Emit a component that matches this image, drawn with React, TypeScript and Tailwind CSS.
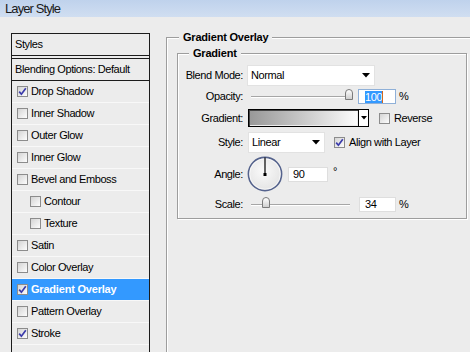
import React from 'react';

type StyleItem = {
  label: string;
  checked?: boolean;
  indent?: boolean;
  selected?: boolean;
};

const styleItems: StyleItem[] = [
  { label: 'Drop Shadow', checked: true },
  { label: 'Inner Shadow' },
  { label: 'Outer Glow' },
  { label: 'Inner Glow' },
  { label: 'Bevel and Emboss' },
  { label: 'Contour', indent: true },
  { label: 'Texture', indent: true },
  { label: 'Satin' },
  { label: 'Color Overlay' },
  { label: 'Gradient Overlay', checked: true, selected: true },
  { label: 'Pattern Overlay' },
  { label: 'Stroke', checked: true },
  { label: '' },
];

const Checkbox = ({ checked }: { checked?: boolean }) => (
  <span className="flex h-[11px] w-[11px] shrink-0 items-center justify-center border border-[#8c8c8c] bg-gradient-to-br from-[#d4d4d4] to-[#fdfdfd]">
    {checked && (
      <svg width="9" height="9" viewBox="0 0 9 9">
        <path d="M1.2 4.6 L3.4 7.2 L7.8 1.2" stroke="#3b3bab" strokeWidth="1.7" fill="none" />
      </svg>
    )}
  </span>
);

const DownArrow = () => (
  <svg width="8" height="5" viewBox="0 0 8 5">
    <polygon points="0,0 8,0 4,4.5" fill="#000" />
  </svg>
);

const Select = ({ value, width }: { value: string; width: string }) => (
  <div className={`flex h-full items-center justify-between border border-[#e2e2e2] bg-white pl-[3px] pr-[4px] ${width}`}>
    <span>{value}</span>
    <DownArrow />
  </div>
);

// slider: track with a tab-like thumb laid over it
const Slider = ({ thumbLeft }: { thumbLeft: number }) => (
  <div className="relative ml-[4px] flex h-full w-[108px] items-center">
    <div className="ml-[4px] h-[2px] w-[99px] border-t border-b border-t-[#a6a6a6] border-b-white" />
    <div
      className="absolute top-[0px] h-[11px] w-[8px] rounded-t-[4px] border border-[#7a7a7a] bg-gradient-to-b from-white to-[#cfcfcf]"
      style={{ left: thumbLeft }}
    />
  </div>
);

const FieldLabel = ({ children }: { children: React.ReactNode }) => (
  <div className="w-[65px] shrink-0 text-right">{children}</div>
);

const AngleDial = () => (
  <svg width="36" height="36" viewBox="0 0 36 36" className="ml-[4px] shrink-0">
    <defs>
      <radialGradient id="dialFill" cx="0.45" cy="0.4" r="0.6">
        <stop offset="0" stopColor="#fafafa" />
        <stop offset="1" stopColor="#e4e4e4" />
      </radialGradient>
    </defs>
    <circle cx="18" cy="18" r="16.6" fill="url(#dialFill)" stroke="#55638d" strokeWidth="1.6" />
    <circle cx="18" cy="18" r="15.3" fill="none" stroke="#ffffff" strokeWidth="0.8" opacity="0.8" />
    <line x1="18" y1="1.5" x2="18" y2="18" stroke="#000" strokeWidth="1.2" />
    <rect x="16.5" y="17" width="3" height="3" fill="#000" />
  </svg>
);

export default function App() {
  return (
    <div className="h-[352px] w-[470px] overflow-hidden bg-[#ececec] font-['Liberation_Sans',Arial,sans-serif] text-[11px] tracking-[-0.4px] text-black">
      {/* title bar */}
      <div className="flex h-[17px] items-center bg-gradient-to-b from-[#bfd2ec] to-[#d0def1] pl-[5px] text-[13px] tracking-[-0.9px] text-[#1a1a1a]">
        Layer Style
      </div>

      <div className="flex">
        {/* styles list */}
        <div className="ml-[11px] mt-[16px] w-[139px] shrink-0 border-x border-t border-[#1c1c1c]">
          <div className="flex h-[22px] items-center border-b border-[#1c1c1c] pl-[3px]">Styles</div>
          <div className="mt-[2px] border-t border-[#1c1c1c]">
            <div className="flex h-[22px] items-center border-b border-[#1c1c1c] pl-[3px]">
              Blending Options: Default
            </div>
            {styleItems.map((item, i) => (
              <div
                key={i}
                className={`flex h-[22px] items-center gap-[3px] border-b border-[#f8f8f8] ${item.indent ? 'pl-[18px]' : 'pl-[5px]'} ${
                  item.selected ? 'bg-[#3399ff] font-bold tracking-[-0.2px] text-white' : ''
                }`}
              >
                {item.label && <Checkbox checked={item.checked} />}
                <span>{item.label}</span>
              </div>
            ))}
          </div>
        </div>

        {/* Gradient Overlay group */}
        <div className="ml-[16px] mt-[20px] h-[400px] w-[320px] shrink-0 border-l border-t border-[#9d9d9d] shadow-[inset_1px_1px_0_#ffffff]">
          <div className="-mt-[8px] ml-[12px] w-fit bg-[#ececec] px-[4px] font-bold leading-[14px] tracking-[-0.2px]">
            Gradient Overlay
          </div>

          <div className="ml-[10px] mt-[9px] w-[290px] border border-[#9d9d9d] pb-[6px] shadow-[inset_1px_1px_0_#ffffff,1px_1px_0_#ffffff]">
            <div className="-mt-[8px] ml-[11px] w-fit bg-[#ececec] px-[4px] font-bold leading-[14px] tracking-[-0.2px]">
              Gradient
            </div>

            {/* Blend Mode */}
            <div className="mt-[5px] flex h-[21px] items-center">
              <FieldLabel>Blend Mode:</FieldLabel>
              <div className="ml-[4px] h-full">
                <Select value="Normal" width="w-[128px]" />
              </div>
            </div>

            {/* Opacity */}
            <div className="mt-[3px] flex h-[15px] items-center">
              <FieldLabel>Opacity:</FieldLabel>
              <Slider thumbLeft={98} />
              <div className="ml-[3px] flex h-full w-[38px] items-center border border-[#8fb0d8] bg-white pl-[6px]">
                <span className="bg-[#3399ff] leading-[12px] text-white">100</span>
                <span className="h-[12px] w-[1px] bg-[#d2691e]" />
              </div>
              <span className="ml-[3px]">%</span>
            </div>

            {/* Gradient */}
            <div className="mt-[5px] flex h-[18px] items-center">
              <FieldLabel>Gradient:</FieldLabel>
              <div className="ml-[5px] flex h-full w-[121px] border border-black shadow-[inset_1px_1px_0_#444]">
                <div className="m-[1px] flex-1 bg-gradient-to-r from-[#999999] to-[#fcfcfc]" />
                <div className="flex w-[10px] items-center justify-center border-l border-black bg-white">
                  <svg width="6" height="4" viewBox="0 0 6 4">
                    <polygon points="0,0 6,0 3,3.5" fill="#000" />
                  </svg>
                </div>
              </div>
              <div className="ml-[10px]">
                <Checkbox />
              </div>
              <span className="ml-[4px]">Reverse</span>
            </div>

            {/* Style */}
            <div className="mt-[5px] flex h-[21px] items-center">
              <FieldLabel>Style:</FieldLabel>
              <div className="ml-[5px] h-full">
                <Select value="Linear" width="w-[77px]" />
              </div>
              <div className="ml-[9px]">
                <Checkbox checked />
              </div>
              <span className="ml-[4px]">Align with Layer</span>
            </div>

            {/* Angle */}
            <div className="mt-[3px] flex h-[36px] items-center">
              <FieldLabel>Angle:</FieldLabel>
              <AngleDial />
              <div className="ml-[5px] flex h-[15px] w-[40px] items-center border border-[#dedede] bg-white pl-[4px]">90</div>
              <span className="mb-[6px] ml-[5px]">°</span>
            </div>

            {/* Scale */}
            <div className="mt-[5px] flex h-[15px] items-center">
              <FieldLabel>Scale:</FieldLabel>
              <Slider thumbLeft={15} />
              <div className="ml-[4px] flex h-full w-[37px] items-center border border-[#dedede] bg-white pl-[5px]">34</div>
              <span className="ml-[3px]">%</span>
            </div>
          </div>
        </div>
      </div>
    </div>
  );
}
